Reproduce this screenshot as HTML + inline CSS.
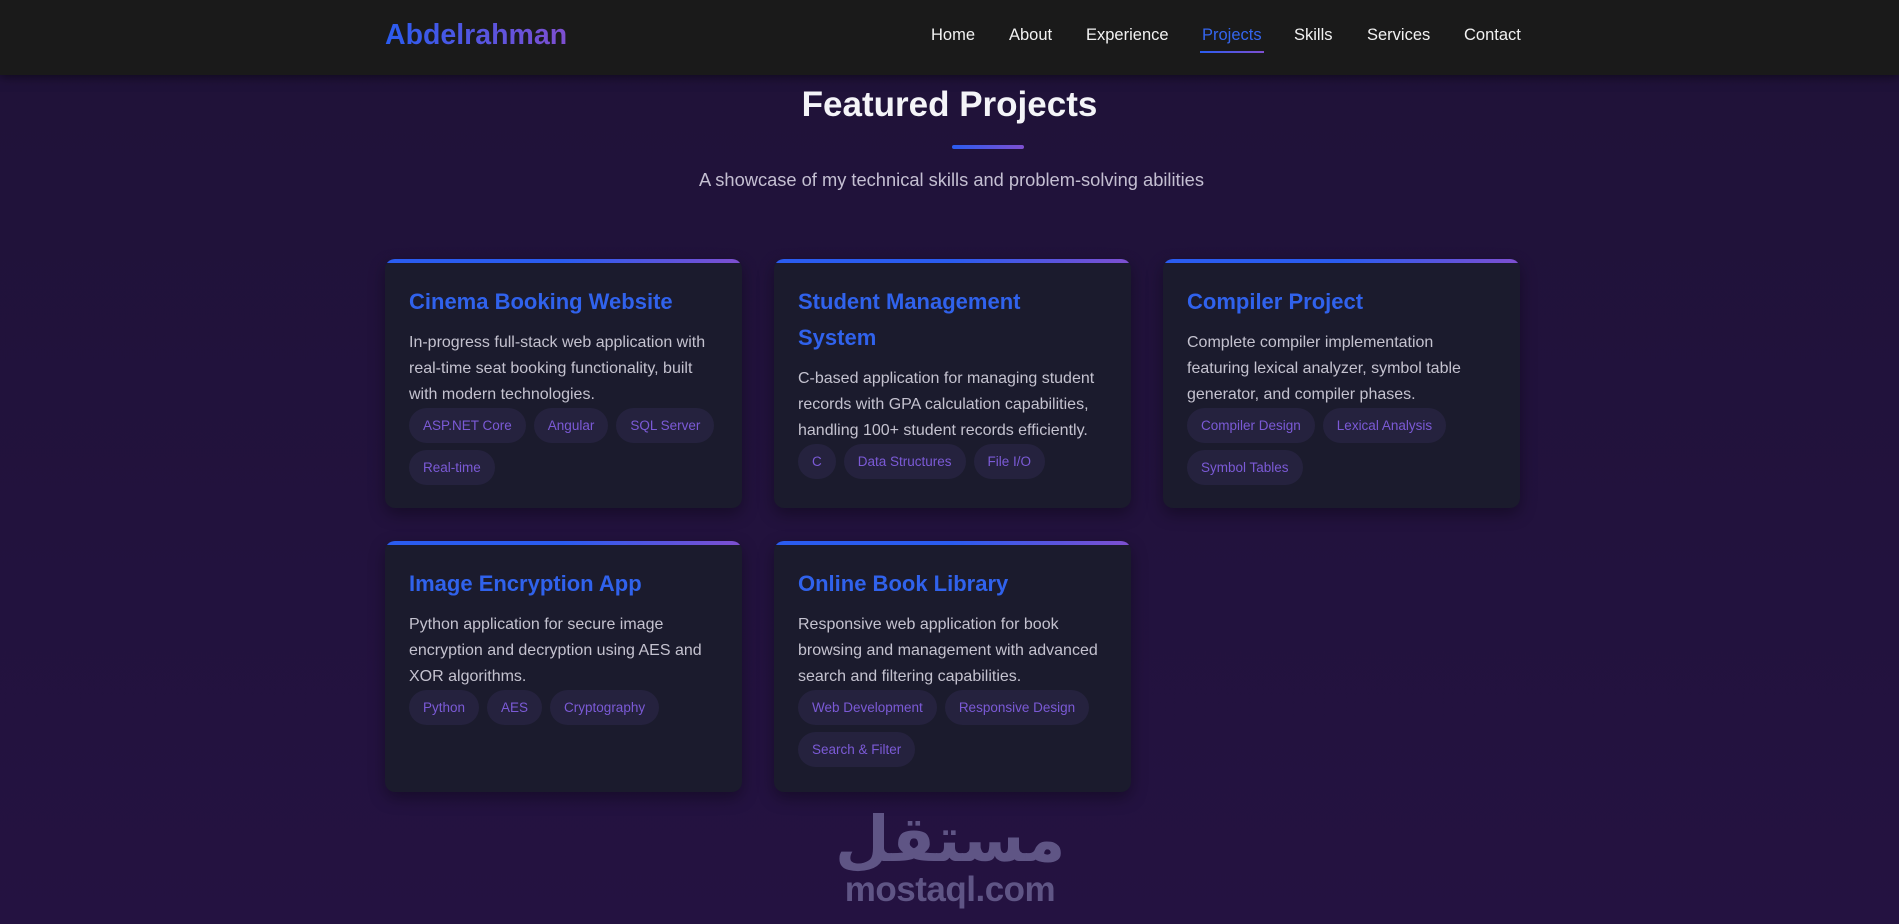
<!DOCTYPE html>
<html><head><meta charset="utf-8"><style>
*{margin:0;padding:0;box-sizing:border-box}
body{width:1899px;height:924px;overflow:hidden;background:linear-gradient(180deg,#1f1238 0%,#241241 100%);font-family:"Liberation Sans",sans-serif;position:relative}
nav{position:absolute;top:0;left:0;width:1899px;height:75px;background:#1a1a1a;box-shadow:0 2px 10px rgba(0,0,0,.5)}
.logo{position:absolute;left:385px;top:19px;font-size:28.5px;font-weight:bold;background:linear-gradient(90deg,#2a5cf0,#7e4fd0);-webkit-background-clip:text;color:transparent}
.links a{position:absolute;top:26px;font-size:16.5px;color:#f2f2f2;text-decoration:none}
.links a.act{color:#3465ee}
.links a.act:after{content:"";position:absolute;left:-2px;right:-2px;top:25px;height:2px;background:linear-gradient(90deg,#2a5cf0,#7e4fd0)}
h1{position:absolute;top:85px;width:100%;left:0;text-align:center;color:#f4f4f8;font-size:35px;font-weight:bold}
.div{position:absolute;left:952px;top:145px;width:72px;height:4px;border-radius:2px;background:linear-gradient(90deg,#2a5cf0,#7e4fd0)}
.sub{position:absolute;top:169px;width:100%;left:2px;text-align:center;color:#c4bfd2;font-size:18.3px}
.card{position:absolute;width:357px;background:#1b1b2d;border-radius:10px;padding:25px 24px;box-shadow:0 6px 16px rgba(0,0,0,.35);overflow:hidden}
.card:before{content:"";position:absolute;left:0;top:0;right:0;height:4px;background:linear-gradient(90deg,#2a5cf0 50%,#7e4fd0)}
.card h3{color:#3062ec;font-size:22px;line-height:36px;font-weight:bold;margin-bottom:10px;max-width:290px}
.card p{color:#c4c2cf;font-size:16px;line-height:26px}
.tags{display:flex;flex-wrap:wrap;gap:7px 8px;margin-top:0px}
.tags span{background:#25223e;color:#7b5ad6;font-size:13.5px;height:35px;line-height:35px;padding:0 14px;border-radius:18px}
.wm{position:absolute;left:835px;top:808px;width:230px;text-align:center;color:#5f5585}
</style></head><body>
<nav><div class="logo">Abdelrahman</div>
<div class="links"><a style="left:931px">Home</a><a style="left:1009px">About</a><a style="left:1086px">Experience</a><a class="act" style="left:1202px">Projects</a><a style="left:1294px">Skills</a><a style="left:1367px">Services</a><a style="left:1464px">Contact</a></div></nav>
<h1>Featured Projects</h1><div class="div"></div>
<div class="sub">A showcase of my technical skills and problem-solving abilities</div>

<div class="card" style="left:385px;top:259px;height:249px"><h3>Cinema Booking Website</h3><p>In-progress full-stack web application with real-time seat booking functionality, built with modern technologies.</p><div class="tags"><span>ASP.NET Core</span><span>Angular</span><span>SQL Server</span><span>Real-time</span></div></div>
<div class="card" style="left:774px;top:259px;height:249px"><h3>Student Management System</h3><p>C-based application for managing student records with GPA calculation capabilities, handling 100+ student records efficiently.</p><div class="tags"><span>C</span><span>Data Structures</span><span>File I/O</span></div></div>
<div class="card" style="left:1163px;top:259px;height:249px"><h3>Compiler Project</h3><p>Complete compiler implementation featuring lexical analyzer, symbol table generator, and compiler phases.</p><div class="tags"><span>Compiler Design</span><span>Lexical Analysis</span><span>Symbol Tables</span></div></div>
<div class="card" style="left:385px;top:541px;height:251px"><h3>Image Encryption App</h3><p>Python application for secure image encryption and decryption using AES and XOR algorithms.</p><div class="tags"><span>Python</span><span>AES</span><span>Cryptography</span></div></div>
<div class="card" style="left:774px;top:541px;height:251px"><h3>Online Book Library</h3><p>Responsive web application for book browsing and management with advanced search and filtering capabilities.</p><div class="tags"><span>Web Development</span><span>Responsive Design</span><span>Search &amp; Filter</span></div></div>

<div class="wm"><div style="font-family:'DejaVu Sans',sans-serif;font-size:63px;font-weight:bold;line-height:64px">مستقل</div><div style="font-size:35px;font-weight:bold;line-height:36px;letter-spacing:-0.5px">mostaql.com</div></div>
</body></html>
